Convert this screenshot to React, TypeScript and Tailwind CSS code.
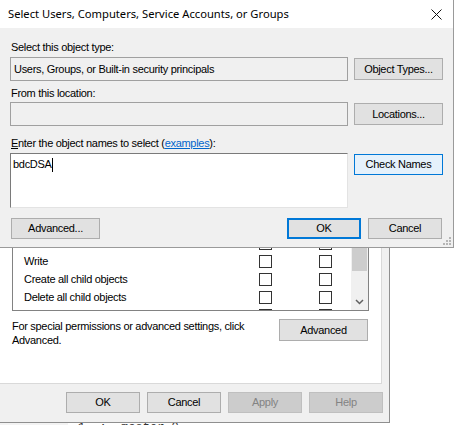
import React from 'react'

const font = "font-['Liberation_Sans',Arial,sans-serif] tracking-[-0.3px]"

const Btn = ({ label, className = '' }: { label: React.ReactNode; className?: string }) => (
    <div className={`flex items-center justify-center bg-[#e1e1e1] border border-[#adadad] text-[11px] text-black ${className}`}>
        {label}
    </div>
)

const Box = () => <div className="w-[13px] h-[13px] border border-[#333333] bg-white" />

const rows = ['Full control', 'Read', 'Write', 'Create all child objects', 'Delete all child objects', 'Read permissions']

// the permissions dialog that sits behind the picker
const BackDialog = () => (
    <div className="w-[390px] h-[423px] flex flex-col bg-[#f0f0f0] border-r border-b border-[#8f8f8f]">
        <div className="w-[382px] h-[384px] bg-white border-r border-b border-[#d9d9d9] pt-[215px] pl-[12px]">
            <div className="w-[357px] h-[96px] border border-[#828282] flex overflow-hidden">
                <div className="flex-1">
                    {rows.map((r, i) => (
                        <div key={i} className="h-[18px] flex items-center shrink-0">
                            <span className="w-[246px] pl-[11px] text-[11px] leading-[18px] text-black">{r}</span>
                            <Box />
                            <div className="w-[47px]" />
                            <Box />
                        </div>
                    ))}
                </div>
                <div className="w-[17px] h-full bg-[#f0f0f0] flex flex-col">
                    <div className="h-[55px] mx-[1px] bg-[#cdcdcd]" />
                    <div className="flex-1" />
                    <div className="h-[17px] flex items-center justify-center">
                        <svg width="9" height="6" viewBox="0 0 9 6">
                            <path d="M1 1 L4.5 4.5 L8 1" fill="none" stroke="#606060" strokeWidth="1.5" />
                        </svg>
                    </div>
                </div>
            </div>
            <div className="w-[357px] flex justify-between mt-[8px]">
                <p className="w-[250px] text-[11px] leading-[14px] text-black">
                    For special permissions or advanced settings, click Advanced.
                </p>
                <Btn label="Advanced" className="w-[89px] h-[22px] mr-[1px]" />
            </div>
        </div>
        <div className="flex justify-end gap-[7px] pr-[6px] pt-[8px]">
            <Btn label="OK" className="w-[74px] h-[21px]" />
            <Btn label="Cancel" className="w-[74px] h-[21px]" />
            <Btn label="Apply" className="w-[74px] h-[21px] !bg-[#cccccc] !border-[#bfbfbf] !text-[#838383]" />
            <Btn label="Help" className="w-[74px] h-[21px] !bg-[#cccccc] !border-[#bfbfbf] !text-[#838383]" />
        </div>
    </div>
)

const Picker = () => (
    <div className="absolute left-0 top-0 w-[454px] h-[248px] bg-[#f0f0f0] border-r border-b border-[#9a9a9a] flex flex-col">
        <div className="h-[28px] bg-white flex items-center justify-between pl-[8px] pr-[11px]">
            <span className="font-['Noto_Sans',sans-serif] tracking-normal text-[11.2px] text-black">Select Users, Computers, Service Accounts, or Groups</span>
            <svg width="11" height="11" viewBox="0 0 11 11">
                <path d="M0.5 0.5 L10.5 10.5 M10.5 0.5 L0.5 10.5" stroke="#111" strokeWidth="1" />
            </svg>
        </div>
        <div className="px-[10px] text-[11px]">
            <div className="mt-[12px] h-[14px] leading-[14px] pl-[1px]">Select this object type:</div>
            <div className="mt-[3px] flex items-start gap-[6px]">
                <div className="w-[338px] h-[24px] border border-[#a0a0a0] flex items-center pl-[3px]">
                    Users, Groups, or Built-in security principals
                </div>
                <Btn label="Object Types..." className="w-[89px] h-[22px] mt-[1px]" />
            </div>
            <div className="mt-[5px] h-[14px] leading-[14px] pl-[1px]">From this location:</div>
            <div className="mt-[2px] flex items-start gap-[6px]">
                <div className="w-[338px] h-[24px] border border-[#a0a0a0]" />
                <Btn label="Locations..." className="w-[89px] h-[22px] mt-[1px]" />
            </div>
            <div className="mt-[10px] h-[14px] leading-[14px] pl-[1px]">
                <span className="underline">E</span>nter the object names to select (<span className="text-[#0066cc] underline">examples</span>):
            </div>
            <div className="mt-[3px] flex items-start gap-[6px]">
                <div className="w-[338px] h-[55px] bg-white border border-t-[#7a7a7a] border-l-[#7a7a7a] border-r-[#e3e3e3] border-b-[#e3e3e3] pl-[2px] pt-[1px] leading-[18px]">
                    bdcDSA<span className="inline-block w-[1px] h-[14px] bg-black align-middle" />
                </div>
                <Btn label="Check Names" className="w-[89px] h-[21px] mt-[1px] !bg-[#e5f1fb] !border-[#0078d7]" />
            </div>
            <div className="mt-[10px] flex items-center">
                <Btn label="Advanced..." className="w-[89px] h-[21px] ml-[1px]" />
                <div className="flex-1" />
                <Btn label="OK" className="w-[74px] h-[21px] !border-2 !border-[#0078d7]" />
                <Btn label="Cancel" className="w-[74px] h-[21px] ml-[7px] mr-[1px]" />
            </div>
        </div>
        <svg className="absolute right-[2px] bottom-[2px]" width="8" height="8" viewBox="0 0 8 8">
            <rect x="6" y="0" width="2" height="2" fill="#b5b5b5" />
            <rect x="3" y="3" width="2" height="2" fill="#b5b5b5" />
            <rect x="6" y="3" width="2" height="2" fill="#b5b5b5" />
            <rect x="0" y="6" width="2" height="2" fill="#b5b5b5" />
            <rect x="3" y="6" width="2" height="2" fill="#b5b5b5" />
            <rect x="6" y="6" width="2" height="2" fill="#b5b5b5" />
        </svg>
    </div>
)

const App = () => {
    return (
        <div className={`relative w-[457px] h-[425px] overflow-hidden bg-white text-black ${font}`}>
            <BackDialog />
            {/* code editor peeking out below */}
            <div className="flex h-[2px] overflow-hidden">
                <div className="w-[68px] bg-[#f3f3f3]" />
                <div className="flex-1 bg-white font-['Liberation_Mono',monospace] tracking-normal text-[12px] leading-[10px] text-[#333] pl-[10px] whitespace-pre">
                    {'1  :  master-0'}
                </div>
            </div>
            <Picker />
        </div>
    )
}

export default App
